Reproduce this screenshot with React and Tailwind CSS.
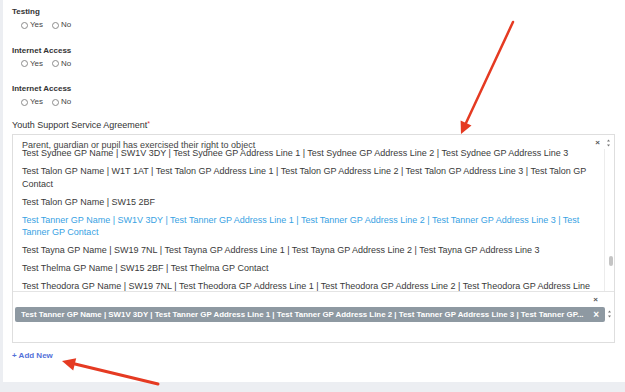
const options = [
  { text: 'Test Sydnee GP Name | SW1V 3DY | Test Sydnee GP Address Line 1 | Test Sydnee GP Address Line 2 | Test Sydnee GP Address Line 3' },
  { text: 'Test Talon GP Name | W1T 1AT | Test Talon GP Address Line 1 | Test Talon GP Address Line 2 | Test Talon GP Address Line 3 | Test Talon GP Contact' },
  { text: 'Test Talon GP Name | SW15 2BF' },
  { text: 'Test Tanner GP Name | SW1V 3DY | Test Tanner GP Address Line 1 | Test Tanner GP Address Line 2 | Test Tanner GP Address Line 3 | Test Tanner GP Contact', active: true },
  { text: 'Test Tayna GP Name | SW19 7NL | Test Tayna GP Address Line 1 | Test Tayna GP Address Line 2 | Test Tayna GP Address Line 3' },
  { text: 'Test Thelma GP Name | SW15 2BF | Test Thelma GP Contact' },
  { text: 'Test Theodora GP Name | SW19 7NL | Test Theodora GP Address Line 1 | Test Theodora GP Address Line 2 | Test Theodora GP Address Line 3 | Test Theodora GP Contact' },
];

function Radio({ label }) {
  return (
    <>
      <span className="w-[7px] h-[7px] rounded-full border border-[#8c8c8c] bg-white" />
      <span className="ml-[2px]">{label}</span>
    </>
  );
}

function RadioGroup({ label }) {
  return (
    <div className="mb-[15.5px]">
      <div className="h-[10px] text-[8px] leading-[10px] font-bold text-[#333]">{label}</div>
      <div className="mt-[3px] flex h-[10px] items-center pl-[9px] text-[8px] text-[#444]">
        <Radio label="Yes" />
        <span className="w-[9px]" />
        <Radio label="No" />
      </div>
    </div>
  );
}

function UpDown() {
  return (
    <svg width="5" height="10" viewBox="0 0 5 10" className="text-[#777]">
      <path d="M2.5 1.5 L4 3.5 L1 3.5 Z" fill="currentColor" />
      <path d="M2.5 8.5 L4 6.5 L1 6.5 Z" fill="currentColor" />
    </svg>
  );
}

export default function App() {
  return (
    <div className="relative min-h-[392px] bg-[#eceef2] pl-[3px] font-['Liberation_Sans',Arial,sans-serif]">
      <div className="h-[382px] bg-white pl-[9px] pr-[10px] pt-[7px]">
        <RadioGroup label="Testing" />
        <RadioGroup label="Internet Access" />
        <RadioGroup label="Internet Access" />

        <div className="-mt-[3px] h-[11px] text-[9px] leading-[11px] text-[#333]">
          Youth Support Service Agreement<span className="relative -top-[2px] text-[7px] text-[#d33]">*</span>
        </div>

        <div className="mt-[3.5px] border border-[#dedede] bg-white">
          {/* search header */}
          <div className="flex h-[14px] items-start">
            <div className="flex-1 pl-[9px] pt-[3.5px] text-[9px] leading-[13px] text-[#444] whitespace-nowrap">
              Parent, guardian or pupil has exercised their right to object
            </div>
            <div className="flex h-[14px] items-center gap-[6px] pr-[3px] pt-[2px]">
              <span className="text-[8px] font-bold leading-none text-[#555]">×</span>
              <UpDown />
            </div>
          </div>

          {/* results list */}
          <div className="flex h-[142px]">
            <div className="flex-1 overflow-hidden">
              <div className="-mt-[4.5px]">
                {options.map((o, i) => (
                  <div
                    key={i}
                    className={`pl-[9px] pr-[8px] py-[2.75px] text-[9px] leading-[12.5px] ${o.active ? 'text-[#38a2e3]' : 'text-[#3a3a3a]'}`}
                  >
                    {o.text}
                  </div>
                ))}
              </div>
            </div>
            <div className="w-[10px] border-l border-[#ececec] pt-[107px]">
              <div className="ml-[4px] h-[10px] w-[4px] rounded-full bg-[#c4c4c4]" />
            </div>
          </div>

          {/* selection */}
          <div className="flex h-[51px] border-t border-[#e4e4e4]">
            <div className="flex-1 pl-[2px]">
              <div className="flex h-[15px] items-center justify-end pr-[7px]">
                <span className="text-[8px] font-bold leading-none text-[#555]">×</span>
              </div>
              <div className="flex h-[15px] items-center rounded-[2px] bg-[#8e99a2] pl-[6px] pr-[6px] text-white">
                <span className="flex-1 overflow-hidden whitespace-nowrap text-[7.9px] font-bold leading-[15px]">
                  Test Tanner GP Name | SW1V 3DY | Test Tanner GP Address Line 1 | Test Tanner GP Address Line 2 | Test Tanner GP Address Line 3 | Test Tanner GP...
                </span>
                <span className="ml-[6px] text-[10px] font-bold leading-none">×</span>
              </div>
            </div>
            <div className="flex w-[9px] items-start justify-center pt-[17px]">
              <UpDown />
            </div>
          </div>
        </div>

        <div className="mt-[8px] text-[8px] font-bold leading-[10px] text-[#5371d9]">+ Add New</div>
      </div>

      <svg className="pointer-events-none absolute left-0 top-0" width="625" height="392" viewBox="0 0 625 392">
        <line x1="513" y1="22" x2="466" y2="123" stroke="#e53a22" strokeWidth="2.5" strokeLinecap="round" />
        <polygon points="461,134 471.5,125.6 460.6,120.6" fill="#e53a22" />
        <line x1="158" y1="384" x2="75" y2="364" stroke="#e53a22" strokeWidth="3" strokeLinecap="round" />
        <polygon points="62,361 76.2,358.3 73.2,370.6" fill="#e53a22" />
      </svg>
    </div>
  );
}
